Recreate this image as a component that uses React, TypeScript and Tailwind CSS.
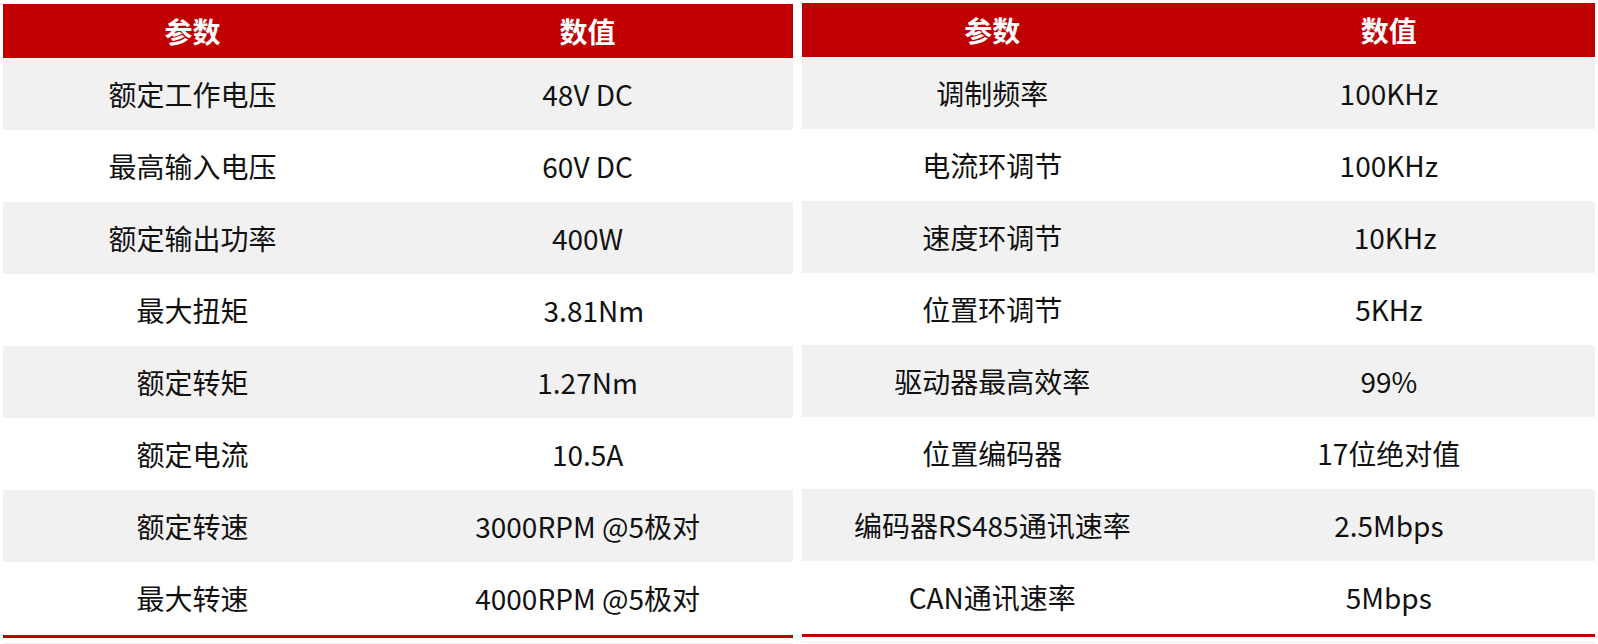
import React from "react";

const left: [string, string][] = [
  ["额定工作电压", "48V DC"],
  ["最高输入电压", "60V DC"],
  ["额定输出功率", "400W"],
  ["最大扭矩", "\u00a0\u00a03.81Nm"],
  ["额定转矩", "1.27Nm"],
  ["额定电流", "10.5A"],
  ["额定转速", "3000RPM @5极对"],
  ["最大转速", "4000RPM @5极对"],
];

const right: [string, string][] = [
  ["调制频率", "100KHz"],
  ["电流环调节", "100KHz"],
  ["速度环调节", "\u00a0\u00a010KHz"],
  ["位置环调节", "5KHz"],
  ["驱动器最高效率", "99%"],
  ["位置编码器", "17位绝对值"],
  ["编码器RS485通讯速率", "2.5Mbps"],
  ["CAN通讯速率", "5Mbps"],
];

function Table({ rows, className }: { rows: [string, string][]; className?: string }) {
  return (
    <div className={"flex flex-col " + (className ?? "")}>
      <div className="flex h-[54px] items-center bg-[#c00000] text-white font-bold text-[28px]">
        <div className="w-[48%] text-center">参数</div>
        <div className="flex-1 text-center">数值</div>
      </div>
      {rows.map(([k, v], i) => (
        <div
          key={i}
          className={
            "flex h-[72px] items-center text-[28px] text-[#111] " +
            (i % 2 === 0 ? "bg-[#f1f1f1]" : "bg-white")
          }
        >
          <div className="w-[48%] text-center whitespace-pre">{k}</div>
          <div className="flex-1 text-center whitespace-pre">{v}</div>
        </div>
      ))}
      <div className="mt-[1px] h-[3px] bg-[#c00000]" />
      <div className="mt-[5px] h-[1px] bg-[#eeeeee]" />
    </div>
  );
}

export default function App() {
  return (
    <div
      className="w-[1598px] h-[644px] bg-white flex gap-[9px] pl-[3px] pr-[3px] overflow-hidden"
      style={{ fontFamily: '"Noto Sans CJK SC", "Noto Sans", sans-serif' }}
    >
      <Table rows={left} className="w-[790px] pt-[4px]" />
      <Table rows={right} className="flex-1 pt-[3px]" />
    </div>
  );
}
